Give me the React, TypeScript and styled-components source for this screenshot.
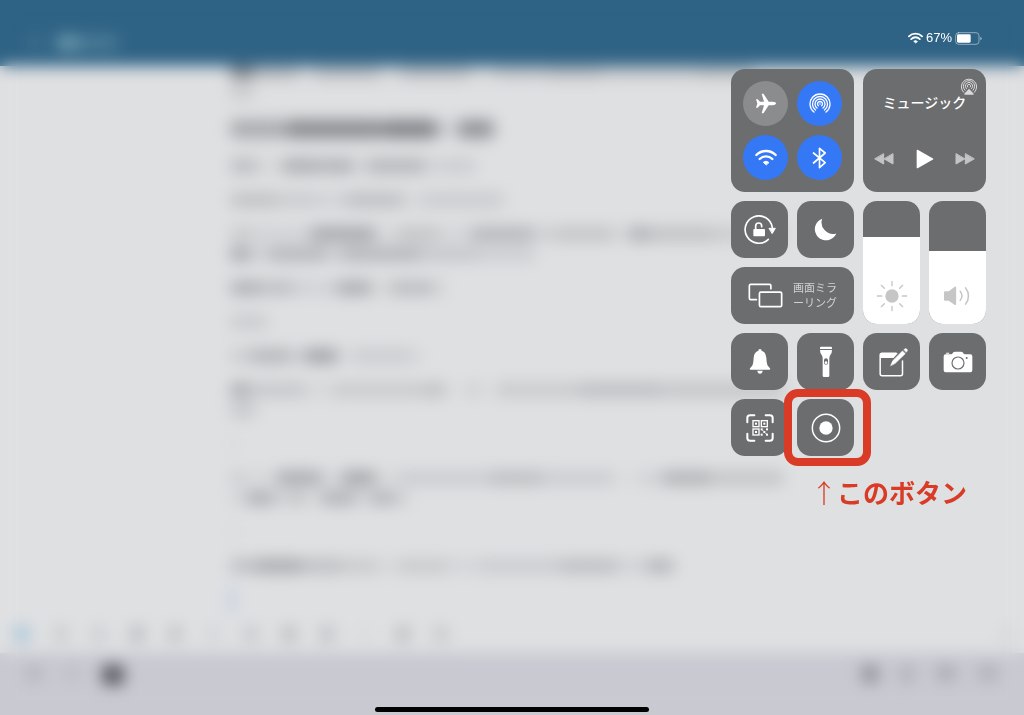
import React, { useState } from "react";
import styled, { createGlobalStyle } from "styled-components";

const GlobalStyle = createGlobalStyle`
  *, *::before, *::after { box-sizing: border-box; }
  body {
    margin: 0;
    background: #dfe0e2;
    font-family: "Liberation Sans", "Noto Sans CJK JP", sans-serif;
  }
  button { font: inherit; color: inherit; }
`;

const TILE = "#6c6d6f";
const BLUE = "#3578f6";
const RED = "#d93b27";

const Screen = styled.div`
  display: grid;
  min-height: 100vh;
  overflow: hidden;
`;

/* ---------- the app behind the control centre ---------- */

const AppLayer = styled.div`
  grid-area: 1 / 1;
  display: flex;
  flex-direction: column;
  min-width: 0;
  background: #dfe0e2;
`;

const AppHeader = styled.div`
  display: flex;
  align-items: center;
  height: 66px;
  padding: 20px 32px 0;
  background: #2f6385;
  z-index: 1;
`;

const Editor = styled.div`
  flex: 1;
  display: flex;
  flex-direction: column;
  gap: 14px;
  width: 564px;
  max-width: 100%;
  margin: -4px auto 0;
`;

const Row = styled.div<{ $tall?: boolean }>`
  display: flex;
  align-items: center;
  height: ${(p) => (p.$tall ? 26 : 20)}px;
`;

const Smudge = styled.i<{ $w: number; $a: number; $h?: number; $gap?: number; $c?: string }>`
  flex: none;
  width: ${(p) => p.$w}px;
  height: ${(p) => p.$h ?? 14}px;
  margin-right: ${(p) => p.$gap ?? 0}px;
  border-radius: 5px;
  opacity: ${(p) => p.$a / 100};
  background: ${(p) => p.$c ?? "#4c4e54"};
`;

const AppToolbar = styled.div`
  display: flex;
  align-items: center;
  gap: 22px;
  height: 38px;
  padding: 0 14px;
`;

const KeyboardBar = styled.div`
  display: flex;
  gap: 22px;
  height: 62px;
  padding: 12px 26px 0;
  background: #c8c9d1;
`;

const Push = styled.span`
  flex: 1;
`;

type Seg = [width: number, alpha: number];
type Block = { tall?: boolean; lines: Seg[][] };

const blocks: Block[] = [
  { lines: [[[24, 62], [44, 26], [16, 8], [66, 24], [20, 6], [70, 24], [24, 6], [50, 18], [60, 24], [90, 16], [60, 22]], [[24, 16]]] },
  { tall: true, lines: [[[56, 38], [96, 60], [54, 66], [8, 24], [14, 8], [36, 54]]] },
  { lines: [[[28, 26], [24, 6], [40, 36], [32, 34], [12, 8], [60, 30], [14, 10], [36, 14]]] },
  { lines: [[[50, 22], [40, 15], [24, 10], [60, 24], [16, 6], [84, 15]]] },
  { lines: [
    [[24, 16], [56, 10], [66, 40], [20, 6], [44, 20], [30, 8], [64, 30], [20, 12], [60, 20], [14, 6], [24, 34], [64, 22], [70, 16]],
    [[20, 40], [18, 12], [60, 30], [12, 12], [82, 30], [60, 18], [54, 12]],
  ] },
  { lines: [[[32, 34], [34, 24], [40, 10], [36, 36], [18, 6], [44, 26], [12, 10]]] },
  { lines: [[[38, 15]]] },
  { lines: [[[20, 14], [42, 30], [12, 12], [34, 44], [14, 4], [60, 14], [10, 8]]] },
  { lines: [[[20, 38], [56, 18], [26, 6], [90, 16], [24, 22], [22, 2], [12, 14], [16, 2], [80, 16], [90, 24], [120, 20]], [[26, 18]]] },
  { lines: [[[6, 6]]] },
  { lines: [
    [[14, 14], [32, 6], [46, 38], [20, 8], [34, 42], [22, 6], [90, 14], [56, 24], [70, 14], [24, 2], [24, 10], [50, 32], [72, 20]],
    [[16, 8], [28, 34], [16, 12], [16, 22], [14, 4], [36, 32], [14, 10], [26, 30], [12, 14]],
  ] },
  { lines: [[[6, 5]]] },
  { lines: [[[24, 24], [50, 38], [40, 24], [34, 16], [20, 6], [50, 16], [30, 8], [80, 14], [60, 24], [28, 10], [28, 30]]] },
];

const toolAlphas = [16, 14, 28, 22, 8, 18, 26, 24, 3, 26, 18];

function BlurredApp() {
  return (
    <AppLayer aria-hidden="true">
      <AppHeader>
        <Smudge $w={6} $a={24} $gap={18} $c="#bfe0e0" />
        <Smudge $w={24} $a={48} $c="#bfe0e0" />
        <Smudge $w={38} $a={22} $c="#bfe0e0" />
      </AppHeader>
      <Editor>
        {blocks.map((b, i) => (
          <div key={i}>
            {b.lines.map((line, j) => (
              <Row key={j} $tall={b.tall}>
                {line.map(([w, a], k) => (
                  <Smudge key={k} $w={w} $a={a} $h={b.tall ? 18 : 14} />
                ))}
              </Row>
            ))}
          </div>
        ))}
        <Row>
          <Smudge $w={4} $a={50} $h={26} $c="#7ba6dd" />
        </Row>
      </Editor>
      <AppToolbar>
        <Smudge $w={16} $h={16} $a={50} $gap={2} $c="#6fa9cf" />
        {toolAlphas.map((a, i) => (
          <Smudge key={i} $w={14} $h={16} $a={a} $gap={2} />
        ))}
        <Push />
        <Smudge $w={6} $h={16} $a={12} />
      </AppToolbar>
      <KeyboardBar>
        <Smudge $w={16} $h={16} $a={16} />
        <Smudge $w={16} $h={16} $a={8} />
        <Smudge $w={22} $h={20} $a={92} />
        <Push />
        <Smudge $w={16} $h={18} $a={48} />
        <Smudge $w={14} $h={18} $a={20} />
        <Smudge $w={20} $h={16} $a={24} />
        <Smudge $w={20} $h={16} $a={20} />
      </KeyboardBar>
    </AppLayer>
  );
}

/* ---------- control centre ---------- */

const ControlCenter = styled.main`
  grid-area: 1 / 1;
  z-index: 2;
  display: flex;
  flex-direction: column;
  align-items: flex-end;
  min-width: 0;
  padding: 30px 38px 3px;
  backdrop-filter: blur(8px);
`;

const StatusBar = styled.div`
  display: flex;
  align-items: center;
  gap: 3px;
  height: 16px;
  margin: 0 4px 23px 0;
  color: #fff;
  font-size: 13px;
  line-height: 16px;
`;

const Tiles = styled.div`
  display: grid;
  grid-template-columns: repeat(4, 57px);
  grid-auto-rows: 57px;
  gap: 9px;
`;

const Panel = styled.section`
  position: relative;
  grid-column: span 2;
  grid-row: span 2;
  border-radius: 14px;
  background: ${TILE};
  color: #fff;
`;

const Connectivity = styled(Panel)`
  display: grid;
  grid-template-columns: 45px 45px;
  gap: 9px;
  padding: 12px;
`;

const RoundButton = styled.button<{ $on?: boolean }>`
  display: grid;
  place-items: center;
  height: 45px;
  padding: 0;
  border: 0;
  border-radius: 50%;
  background: ${(p) => (p.$on ? BLUE : "#8b8c8d")};
`;

const Music = styled(Panel)`
  display: flex;
  flex-direction: column;
  justify-content: space-between;
  padding: 24px 11px 23px;
`;

const MusicTitle = styled.h2`
  margin: 0;
  font-size: 14px;
  font-weight: 500;
  line-height: 20px;
  text-align: center;
`;

const PlainButton = styled.button<{ $dim?: boolean }>`
  display: grid;
  place-items: center;
  padding: 0;
  border: 0;
  background: none;
  opacity: ${(p) => (p.$dim ? 0.6 : 1)};
`;

const AirPlayButton = styled(PlainButton)`
  position: absolute;
  top: 9px;
  right: 8px;
  opacity: 0.75;
`;

const Transport = styled.div`
  display: flex;
  align-items: center;
  justify-content: space-between;
`;

const Tile = styled.button<{ $wide?: boolean }>`
  display: flex;
  align-items: center;
  justify-content: center;
  gap: 10px;
  grid-column: span ${(p) => (p.$wide ? 2 : 1)};
  padding: 0;
  border: 0;
  border-radius: 14px;
  background: ${TILE};
  color: #fff;
`;

const MirrorLabel = styled.span`
  width: 44px;
  color: #d2d2d3;
  font-size: 11px;
  line-height: 15px;
  text-align: left;
  word-break: break-all;
  line-break: anywhere;
`;

const SliderTile = styled.label`
  position: relative;
  grid-row: span 2;
  display: flex;
  border-radius: 14px;
  overflow: hidden;
`;

const SliderInput = styled.input`
  appearance: none;
  writing-mode: vertical-lr;
  direction: rtl;
  width: 100%;
  height: 100%;
  margin: 0;
  background: ${TILE};
  &::-webkit-slider-thumb {
    appearance: none;
    width: 57px;
    height: 1px;
    background: transparent;
  }
`;

const SliderIcon = styled.span`
  position: absolute;
  inset: auto 0 12px;
  display: grid;
  place-items: center;
  height: 32px;
  color: #c6c6c7;
  pointer-events: none;
`;

const Marked = styled.div`
  position: relative;
  display: grid;
  &::after {
    content: "";
    position: absolute;
    inset: -10px -17px -10px -13px;
    border: 8px solid ${RED};
    border-radius: 14px;
    pointer-events: none;
  }
`;

const Callout = styled.p`
  margin: 20px 19px 0 0;
  color: ${RED};
  font-family: "Noto Sans CJK JP", sans-serif;
  font-size: 26px;
  font-weight: 700;
  line-height: 32px;
`;

const Arrow = styled.span`
  font-weight: 300;
`;

const HomeIndicator = styled.div`
  align-self: center;
  width: 274px;
  height: 5px;
  margin-top: auto;
  border-radius: 3px;
  background: #000;
`;

/* ---------- icons ---------- */

type IconProps = { w: number; h: number; box: string; children: React.ReactNode; line?: number };

function Icon({ w, h, box, children, line }: IconProps) {
  return (
    <svg
      width={w}
      height={h}
      viewBox={box}
      fill={line ? "none" : "currentColor"}
      stroke={line ? "currentColor" : "none"}
      strokeWidth={line}
      strokeLinecap="round"
      strokeLinejoin="round"
      aria-hidden="true"
    >
      {children}
    </svg>
  );
}

const WifiIcon = ({ w, h, line }: { w: number; h: number; line: number }) => (
  <Icon w={w} h={h} box="0 0 66 51" line={line}>
    <path d="M4 18 A41 41 0 0 1 62 18" />
    <path d="M14 30 A27 27 0 0 1 52 30" />
    <path d="M33 47 L25 40 A12 12 0 0 1 41 40 Z" fill="currentColor" strokeWidth="3" />
  </Icon>
);

const BatteryIcon = () => (
  <Icon w={27} h={13} box="0 0 81 39" line={2.5}>
    <rect x="2" y="2" width="70" height="35" rx="9" opacity="0.55" />
    <rect x="6" y="7" width="41" height="25" rx="4" fill="currentColor" stroke="none" />
    <path d="M76 14 q4 1 4 5.500 t-4 5.500 z" fill="currentColor" stroke="none" opacity="0.55" />
  </Icon>
);

const PlaneIcon = () => (
  <Icon w={22} h={21} box="0 0 66 62">
    <path d="M41 26 L27 4 q-1 -2 -3 -2 h-4 l7 24 H15 L8 18 H3 l4 13 -4 13 h5 l7 -8 h12 l-7 24 h4 q2 0 3 -2 L41 36 h12 q10 -1 10 -5 q0 -4 -10 -5 z" />
  </Icon>
);

const AirDropIcon = () => (
  <Icon w={22} h={22} box="-33 -33 66 66" line={4}>
    <path d="M-18 24 A30 30 0 1 1 18 24" />
    <path d="M-13.500 18 A22.500 22.500 0 1 1 13.500 18" />
    <path d="M-9 12 A15 15 0 1 1 9 12" />
    <path d="M-5 5.500 A7.500 7.500 0 1 1 5 5.500" />
    <circle r="2.500" fill="currentColor" stroke="none" />
  </Icon>
);

const BluetoothIcon = () => (
  <Icon w={15} h={22} box="0 0 44 66" line={5}>
    <path d="M4 18 L39 47 L22 62 V4 L39 18 L4 48" />
  </Icon>
);

const AirPlayIcon = () => (
  <Icon w={18} h={18} box="0 0 54 54" line={3}>
    <path d="M11 43 A23 23 0 1 1 43 43" />
    <path d="M15 37 A17 17 0 1 1 39 37" />
    <path d="M19 32 A11 11 0 1 1 35 32" />
    <path d="M23 27 A5 5 0 1 1 31 27" />
    <path d="M27 32 L41 47 Q42 50 39 50 H15 Q12 50 13 47 Z" fill="currentColor" stroke="none" />
  </Icon>
);

const PlayIcon = () => (
  <Icon w={18} h={20} box="0 0 54 60" line={4}>
    <path d="M4 4 L50 30 L4 56 Z" fill="currentColor" />
  </Icon>
);

const RewindIcon = () => (
  <Icon w={20} h={12} box="0 0 60 36" line={3}>
    <path d="M29 3 V33 L3 18 Z M57 3 V33 L31 18 Z" fill="currentColor" />
  </Icon>
);

const ForwardIcon = () => (
  <Icon w={20} h={12} box="0 0 60 36" line={3}>
    <path d="M3 3 V33 L29 18 Z M31 3 V33 L57 18 Z" fill="currentColor" />
  </Icon>
);

const RotationLockIcon = () => (
  <Icon w={32} h={30} box="0 0 96 90" line={5}>
    <path d="M73 73 A41 41 0 1 1 85 38" />
    <path d="M76 40 H94 L85 55 Z" fill="currentColor" strokeWidth="3" />
    <rect x="28" y="42" width="35" height="22" rx="3" fill="currentColor" stroke="none" />
    <path d="M35 43 V33 A9 9 0 0 1 53 33 V35" />
  </Icon>
);

const MoonIcon = () => (
  <Icon w={23} h={23} box="0 0 70 70">
    <path d="M25 2 A34 34 0 1 0 68 47 A35 35 0 0 1 25 2 Z" />
  </Icon>
);

const MirrorIcon = () => (
  <Icon w={35} h={25} box="0 0 104 74" line={5}>
    <path d="M25 49 H8 a4 4 0 0 1 -4 -4 V8 a4 4 0 0 1 4 -4 H64 a4 4 0 0 1 4 4 V17" />
    <rect x="34" y="27" width="66" height="43" rx="4" />
  </Icon>
);

const SunIcon = () => (
  <Icon w={32} h={32} box="-48 -48 96 96" line={4}>
    <circle r="20" fill="currentColor" stroke="none" />
    <path d="M0 -31 V-44 M0 31 V44 M-31 0 H-44 M31 0 H44 M-23 -23 L-32 -32 M23 -23 L32 -32 M-23 23 L-32 32 M23 23 L32 32" />
  </Icon>
);

const SpeakerIcon = () => (
  <Icon w={29} h={22} box="0 0 86 64" line={4.5}>
    <path d="M6 18 H17 L34 5 Q39 2 39 8 V55 Q39 61 34 58 L17 46 H6 Q3 46 3 43 V21 Q3 18 6 18 Z" fill="currentColor" stroke="none" />
    <path d="M51 18 A22 22 0 0 1 51 45" />
    <path d="M67 8 A38 38 0 0 1 67 56" />
  </Icon>
);

const BellIcon = () => (
  <Icon w={22} h={27} box="0 0 66 81">
    <path d="M33 3 Q38 3 38 8 Q51 12 52 29 Q53 49 57 54 L63 61 Q65 65 61 65 H5 Q1 65 3 61 L9 54 Q13 49 14 29 Q15 12 28 8 Q28 3 33 3 Z" />
    <path d="M25 68 H41 Q40 77 33 77 Q26 77 25 68 Z" />
  </Icon>
);

const FlashlightIcon = () => (
  <Icon w={14} h={32} box="0 0 42 96">
    <path d="M3 5 Q3 2 6 2 H36 Q39 2 39 5 V9 H3 Z" />
    <path
      fillRule="evenodd"
      d="M3 12 H39 Q39 22 34 27 Q31 31 31 36 V89 Q31 93 27 93 H15 Q11 93 11 89 V36 Q11 31 8 27 Q3 22 3 12 Z M21 37 Q15 37 15 43 V50 Q15 56 21 56 Q27 56 27 50 V43 Q27 37 21 37 Z"
    />
    <circle cx="21" cy="50" r="4" />
  </Icon>
);

const NoteIcon = () => (
  <Icon w={35} h={30} box="-14 0 104 90" line={4.5}>
    <path d="M52 19 H10 Q4 19 4 25 V80 Q4 86 10 86 H65 Q71 86 71 80 V42" />
    <path d="M4 33 V25 Q4 19 10 19 H57 L44 33 Z" fill="currentColor" stroke="none" />
    <path d="M36 55 L42 41 L71 12 L79 20 L49 49 Z" fill="currentColor" strokeWidth="2" />
    <path d="M75 8 L78 5 Q81 3 84 6 Q88 9 85 13 L82 16 Z" fill="currentColor" strokeWidth="1" />
  </Icon>
);

const CameraIcon = () => (
  <Icon w={30} h={22} box="0 0 90 66">
    <path d="M8 10 H24 Q27 10 29 7 L31 4 Q33 2 36 2 H54 Q57 2 59 4 L61 7 Q63 10 66 10 H82 Q88 10 88 16 V58 Q88 64 82 64 H8 Q2 64 2 58 V16 Q2 10 8 10 Z" />
    <rect x="9" y="5" width="10" height="3" rx="1" />
    <circle cx="45" cy="36" r="18" fill="none" stroke={TILE} strokeWidth="3.500" />
    <circle cx="71" cy="21" r="3" fill={TILE} />
  </Icon>
);

const QrIcon = () => (
  <Icon w={28} h={28} box="0 0 84 84" line={6}>
    <path d="M4 25 V12 Q4 4 12 4 H25 M59 4 H72 Q80 4 80 12 V25 M80 59 V72 Q80 80 72 80 H59 M25 80 H12 Q4 80 4 72 V59" />
    <g strokeWidth="4" strokeLinejoin="miter">
      <rect x="21" y="20" width="18" height="18" />
      <rect x="46" y="20" width="18" height="18" />
      <rect x="21" y="45" width="18" height="18" />
    </g>
    <g fill="currentColor" stroke="none">
      <rect x="27" y="26" width="6" height="6" />
      <rect x="52" y="26" width="6" height="6" />
      <rect x="27" y="51" width="6" height="6" />
      <rect x="44" y="43" width="6" height="6" />
      <rect x="60" y="43" width="6" height="6" />
      <rect x="52" y="51" width="6" height="6" />
      <rect x="44" y="59" width="6" height="6" />
      <rect x="60" y="59" width="6" height="6" />
      <rect x="49" y="48" width="3" height="3" />
      <rect x="58" y="57" width="3" height="3" />
    </g>
  </Icon>
);

const RecordIcon = () => (
  <Icon w={30} h={30} box="-45 -45 90 90" line={4.5}>
    <circle r="41" />
    <circle r="20" fill="currentColor" stroke="none" />
  </Icon>
);

/* ---------- assembly ---------- */

function VerticalSlider({ label, start, icon }: { label: string; start: number; icon: React.ReactNode }) {
  const [value, setValue] = useState(start);
  return (
    <SliderTile>
      <SliderInput
        type="range"
        min={0}
        max={100}
        value={value}
        aria-label={label}
        onChange={(e) => setValue(Number(e.target.value))}
        style={{ backgroundImage: `linear-gradient(to top, #fff ${value}%, transparent ${value}%)` }}
      />
      <SliderIcon>{icon}</SliderIcon>
    </SliderTile>
  );
}

export default function App() {
  return (
    <>
      <GlobalStyle />
      <Screen>
        <BlurredApp />
        <ControlCenter>
          <StatusBar>
            <WifiIcon w={15} h={12} line={8} />
            <span>67%</span>
            <BatteryIcon />
          </StatusBar>
          <Tiles>
            <Connectivity>
              <RoundButton aria-label="機内モード"><PlaneIcon /></RoundButton>
              <RoundButton $on aria-label="AirDrop"><AirDropIcon /></RoundButton>
              <RoundButton $on aria-label="Wi-Fi"><WifiIcon w={22} h={17} line={7} /></RoundButton>
              <RoundButton $on aria-label="Bluetooth"><BluetoothIcon /></RoundButton>
            </Connectivity>
            <Music>
              <MusicTitle>ミュージック</MusicTitle>
              <AirPlayButton aria-label="AirPlay"><AirPlayIcon /></AirPlayButton>
              <Transport>
                <PlainButton $dim aria-label="前へ"><RewindIcon /></PlainButton>
                <PlainButton aria-label="再生"><PlayIcon /></PlainButton>
                <PlainButton $dim aria-label="次へ"><ForwardIcon /></PlainButton>
              </Transport>
            </Music>
            <Tile aria-label="画面の向きのロック"><RotationLockIcon /></Tile>
            <Tile aria-label="おやすみモード"><MoonIcon /></Tile>
            <VerticalSlider label="明るさ" start={71} icon={<SunIcon />} />
            <VerticalSlider label="音量" start={59} icon={<SpeakerIcon />} />
            <Tile $wide>
              <MirrorIcon />
              <MirrorLabel>画面ミラーリング</MirrorLabel>
            </Tile>
            <Tile aria-label="消音モード"><BellIcon /></Tile>
            <Tile aria-label="フラッシュライト"><FlashlightIcon /></Tile>
            <Tile aria-label="メモ"><NoteIcon /></Tile>
            <Tile aria-label="カメラ"><CameraIcon /></Tile>
            <Tile aria-label="QRコード"><QrIcon /></Tile>
            <Marked>
              <Tile aria-label="画面収録"><RecordIcon /></Tile>
            </Marked>
          </Tiles>
          <Callout>
            <Arrow>↑</Arrow>このボタン
          </Callout>
          <HomeIndicator />
        </ControlCenter>
      </Screen>
    </>
  );
}
